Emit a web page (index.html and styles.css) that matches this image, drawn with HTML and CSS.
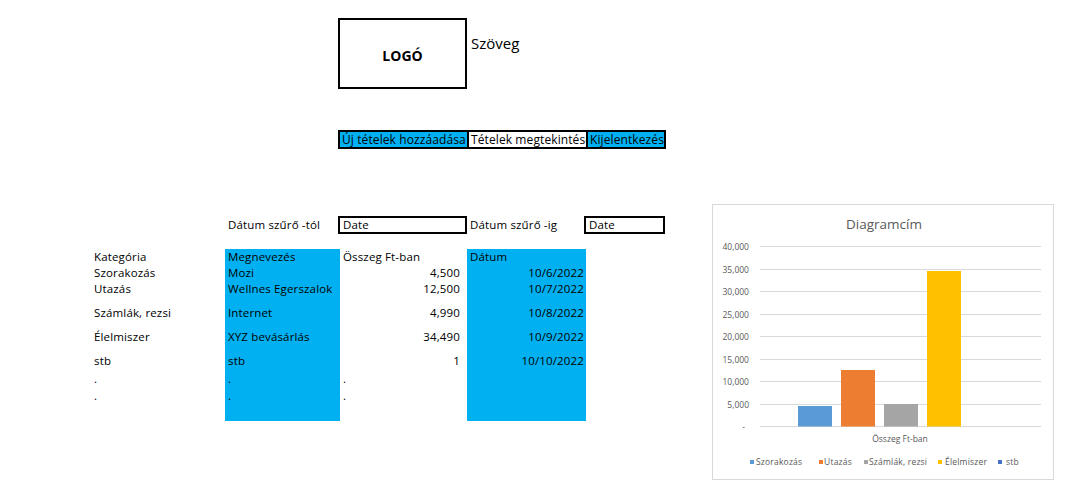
FILE: index.html
```html
<!DOCTYPE html>
<html lang="hu">
<head>
<meta charset="utf-8">
<title>Költségkövető</title>
<link rel="stylesheet" href="styles.css">
</head>
<body>
<header class="header">
  <div class="brand">
    <div class="logo">LOGÓ</div>
    <div class="brand-text">Szöveg</div>
  </div>
  <nav class="nav">
    <a class="nav-cell blue">Új tételek hozzáadása</a>
    <a class="nav-cell white">Tételek megtekintése</a>
    <a class="nav-cell blue last">Kijelentkezés</a>
  </nav>
</header>
<main class="lower">
  <section class="sheet">
    <div class="filter">
      <div class="filter-label first">Dátum szűrő -tól</div>
      <div class="date-box wide">Date</div>
      <div class="filter-label">Dátum szűrő -ig</div>
      <div class="date-box narrow">Date</div>
    </div>
    <div class="table">
      <div class="row r16"><div class="c">Kategória</div><div class="c blue">Megnevezés</div><div class="c">Összeg Ft-ban</div><div class="c blue">Dátum</div></div>
      <div class="row r16"><div class="c">Szorakozás</div><div class="c blue">Mozi</div><div class="c num">4,500</div><div class="c blue num">10/6/2022</div></div>
      <div class="row r16"><div class="c">Utazás</div><div class="c blue">Wellnes Egerszalok</div><div class="c num">12,500</div><div class="c blue num">10/7/2022</div></div>
      <div class="row r24"><div class="c">Számlák, rezsi</div><div class="c blue">Internet</div><div class="c num">4,990</div><div class="c blue num">10/8/2022</div></div>
      <div class="row r24"><div class="c">Élelmiszer</div><div class="c blue">XYZ bevásárlás</div><div class="c num">34,490</div><div class="c blue num">10/9/2022</div></div>
      <div class="row r24"><div class="c">stb</div><div class="c blue">stb</div><div class="c num">1</div><div class="c blue num">10/10/2022</div></div>
      <div class="row r18"><div class="c">.</div><div class="c blue">.</div><div class="c">.</div><div class="c blue"></div></div>
      <div class="row r17"><div class="c">.</div><div class="c blue">.</div><div class="c">.</div><div class="c blue"></div></div>
      <div class="row r17"><div class="c"></div><div class="c blue"></div><div class="c"></div><div class="c blue"></div></div>
    </div>
  </section>
  <figure class="chart">
    <svg width="342" height="276" viewBox="0 0 342 276" xmlns="http://www.w3.org/2000/svg">
      <text class="title" x="172" y="25" text-anchor="middle">Diagramcím</text>
      <g class="grid">
        <line x1="48" y1="42.5" x2="329" y2="42.5"/>
        <line x1="48" y1="65.5" x2="329" y2="65.5"/>
        <line x1="48" y1="87.5" x2="329" y2="87.5"/>
        <line x1="48" y1="110.5" x2="329" y2="110.5"/>
        <line x1="48" y1="132.5" x2="329" y2="132.5"/>
        <line x1="48" y1="155.5" x2="329" y2="155.5"/>
        <line x1="48" y1="177.5" x2="329" y2="177.5"/>
        <line x1="48" y1="200.5" x2="329" y2="200.5"/>
        <line x1="48" y1="222.5" x2="329" y2="222.5"/>
      </g>
      <g class="ylab" text-anchor="end">
        <text x="37" y="45.5">40,000</text>
        <text x="37" y="68.5">35,000</text>
        <text x="37" y="90.5">30,000</text>
        <text x="37" y="113.5">25,000</text>
        <text x="37" y="135.5">20,000</text>
        <text x="37" y="158.5">15,000</text>
        <text x="37" y="180.5">10,000</text>
        <text x="37" y="203.5">5,000</text>
        <text x="33" y="225.5">-</text>
      </g>
      <rect x="86" y="202" width="34" height="20.5" fill="#5b9bd5"/>
      <rect x="129" y="166" width="34" height="56.5" fill="#ed7d31"/>
      <rect x="172" y="200" width="34" height="22.5" fill="#a5a5a5"/>
      <rect x="215" y="67" width="34" height="155.5" fill="#ffc000"/>
      <text class="axis" x="188" y="238" text-anchor="middle">Összeg Ft-ban</text>
      <g class="legend">
        <rect x="38" y="256" width="4" height="4" fill="#5b9bd5"/>
        <text x="44" y="261">Szorakozás</text>
        <rect x="107" y="256" width="4" height="4" fill="#ed7d31"/>
        <text x="112" y="261">Utazás</text>
        <rect x="152" y="256" width="4" height="4" fill="#a5a5a5"/>
        <text x="157" y="261">Számlák, rezsi</text>
        <rect x="226" y="256" width="4" height="4" fill="#ffc000"/>
        <text x="233" y="261">Élelmiszer</text>
        <rect x="286" y="256" width="4" height="4" fill="#4472c4"/>
        <text x="294" y="261">stb</text>
      </g>
    </svg>
  </figure>
</main>
</body>
</html>
```
FILE: styles.css
```css
* { box-sizing: border-box; }
html, body { margin: 0; padding: 0; background: #fff; }
body {
  font-family: "Open Sans", "Noto Sans", Arial, sans-serif;
  font-size: 11.5px;
  letter-spacing: 0.15px;
  color: #000;
  width: 1087px;
  height: 498px;
  overflow: hidden;
}

.header { padding-left: 338px; padding-top: 18px; }
.brand { display: flex; align-items: flex-start; }
.logo {
  width: 129px;
  height: 71px;
  border: 2px solid #000;
  display: flex;
  align-items: center;
  justify-content: center;
  font-weight: 700;
  font-size: 14px;
  letter-spacing: 0;
  padding-top: 4px;
}
.brand-text { font-size: 15px; letter-spacing: 0; margin-left: 4px; margin-top: 15px; line-height: 20px; }

.nav { display: flex; margin-top: 41px; height: 19px; }
.nav-cell {
  display: block;
  height: 19px;
  border: 2px solid #000;
  border-right: none;
  padding: 0 2px;
  font-size: 12px;
  letter-spacing: 0.1px;
  line-height: 15px;
  white-space: nowrap;
  overflow: hidden;
  color: #000;
}
.nav-cell.last { border-right: 2px solid #000; }
.nav-cell:nth-child(1) { width: 129px; }
.nav-cell:nth-child(2) { width: 119px; }
.nav-cell:nth-child(3) { width: 80px; }
.blue { background: #00b0f0; }
.white { background: #fff; }

.lower { display: flex; margin-top: 55px; align-items: flex-start; }
.sheet { width: 712px; padding-top: 12px; }

.filter { display: flex; height: 18px; align-items: stretch; }
.filter-label { line-height: 17px; padding-left: 3px; }
.filter-label.first { margin-left: 225px; width: 113px; }
.filter-label:not(.first) { width: 117px; }
.date-box {
  border: 2px solid #000;
  line-height: 14px;
  padding-left: 3px;
}
.date-box.wide { width: 129px; }
.date-box.narrow { width: 81px; }

.table { margin-top: 15px; }
.row {
  display: grid;
  grid-template-columns: 134px 115px 127px 119px;
  margin-left: 91px;
}
.r16 { height: 16px; }
.r24 { height: 24px; }
.r18 { height: 18px; }
.r17 { height: 17px; }
.c {
  display: flex;
  align-items: flex-end;
  padding: 0 3px 1px;
  line-height: 15px;
  white-space: nowrap;
  overflow: hidden;
}
.num { justify-content: flex-end; }
.row .c:nth-child(3).num { padding-right: 7px; }
.row .c:nth-child(4).num { padding-right: 2px; }

.chart {
  margin: 0;
  width: 342px;
  height: 276px;
  border: 1px solid #d9d9d9;
  background: #fff;
}
.chart svg { display: block; margin: -1px; }
.chart text { font-family: "Open Sans", "Noto Sans", Arial, sans-serif; fill: #595959; letter-spacing: 0; }
.chart .title { font-size: 13.5px; }
.chart .ylab text { font-size: 8.5px; }
.chart .axis { font-size: 8.5px; }
.chart .legend text { font-size: 8.5px; letter-spacing: 0.2px; }
.grid line { stroke: #d9d9d9; stroke-width: 1; }
```
